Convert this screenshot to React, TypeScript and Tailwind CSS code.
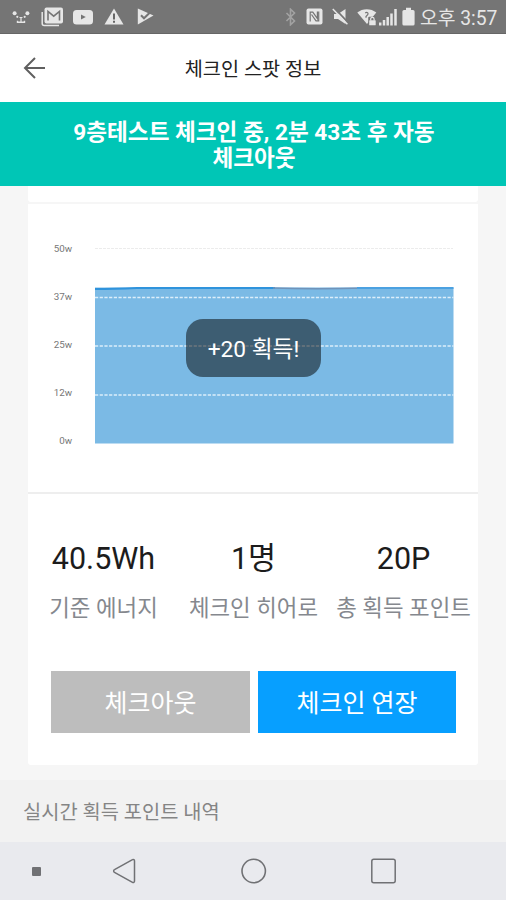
import type { ReactNode } from 'react'

interface Stat {
  value: string
  label: string
}

const STATS: Stat[] = [
  { value: '40.5Wh', label: '기준 에너지' },
  { value: '1명', label: '체크인 히어로' },
  { value: '20P', label: '총 획득 포인트' },
]

const AXIS_LABELS = ['50w', '37w', '25w', '12w', '0w']

function Icon({ w, h, className = '', children }: { w: number; h: number; className?: string; children: ReactNode }) {
  return (
    <svg width={w} height={h} viewBox={`0 0 ${w} ${h}`} fill="none" className={`shrink-0 ${className}`}>
      {children}
    </svg>
  )
}

function StatusBar() {
  return (
    <div className="h-[34px] bg-[#757575] border-b border-[#666666] flex items-center text-[#e6e6e6]">
      <Icon w={18} h={18} className="ml-3">
        <g fill="currentColor">
          <circle cx="2.6" cy="5.3" r="2" />
          <circle cx="15.4" cy="5.3" r="2" />
          <circle cx="5.3" cy="8.8" r="1.1" />
          <circle cx="12.7" cy="8.8" r="1.1" />
        </g>
        <path d="M7.5 9.5h3M9 9.5V14" stroke="currentColor" strokeWidth="1.2" />
        <path d="M5.5 12.8v1.5h7v-1.5" stroke="currentColor" strokeWidth="1.4" />
      </Icon>
      <Icon w={22} h={20} className="ml-[11px]">
        <path d="M1.2 5v11.5a2 2 0 0 0 2 2H18" stroke="currentColor" strokeWidth="1.5" />
        <rect x="3.5" y=".5" width="18.5" height="16" rx="2" fill="currentColor" />
        <path d="M7 13.5v-9l5.700 4.700 5.800-4.700v9" stroke="#757575" strokeWidth="1.6" />
      </Icon>
      <Icon w={20} h={16} className="ml-[10px]">
        <rect y="1" width="20" height="14.5" rx="3.5" fill="currentColor" />
        <path d="M8 5.5v5l4.800-2.500z" fill="#757575" />
      </Icon>
      <Icon w={20} h={17} className="ml-[11px]">
        <path d="M10 .5l9.500 16H.5z" fill="currentColor" />
        <path d="M10 5.5v6M10 12.7v2" stroke="#666666" strokeWidth="2" />
      </Icon>
      <Icon w={17} h={17} className="ml-[13px]">
        <path d="M.8.5 16.5 7.600.8 16.500z" fill="currentColor" />
        <path d="m4 7.300 3 3L14.500 3" stroke="#757575" strokeWidth="2" />
      </Icon>

      <div className="ml-auto mr-[7px] flex items-center">
        <Icon w={12} h={18} className="text-[#a2a2a2]">
          <path d="m1.500 5 8 8-4 3.800V1.200l4 3.800-8 8" stroke="currentColor" strokeWidth="1.6" />
        </Icon>
        <Icon w={17} h={17} className="ml-[9px]">
          <rect x=".5" y=".5" width="16" height="16" rx="2" fill="currentColor" />
          <path d="M4.200 13.500V4.200h2.600l4.600 6.500V3.500M12.700 3.500v9.300H10L5.500 6.500" stroke="#757575" strokeWidth="1.2" />
        </Icon>
        <Icon w={17} h={17} className="ml-[9px]">
          <path d="M2 6h4l7.500-5v15L6 11H2z" fill="currentColor" />
          <path d="m2.500.2 14.300 15.200" stroke="#757575" strokeWidth="1.8" />
          <path d="m.8 1 14.600 15.200" stroke="currentColor" strokeWidth="1.5" />
        </Icon>
        <Icon w={20} h={18} className="ml-[8px]">
          <path d="M.3 4.500C5.500 0 14 0 19.300 4.500L10 16z" fill="currentColor" />
          <path d="M8.200 5c2-1.500 4 .5 2 2.200L9 8.500v1.200" stroke="#757575" strokeWidth="1.2" />
          <rect x="11.2" y="8.8" width="8" height="9" rx="1" fill="#757575" />
          <rect x="12.2" y="12.3" width="6.5" height="5" rx=".5" fill="currentColor" />
          <path d="M13.700 12.500V11a1.700 1.700 0 0 1 3.400 0v1.500" stroke="currentColor" strokeWidth="1.2" />
        </Icon>
        <Icon w={18} h={18} className="ml-[2px]">
          <path d="M1.200 14.500v3M5 12v5.500M8.700 9v8.500M12.500 5.500v12M16.500 1v16.500" stroke="currentColor" strokeWidth="2.5" />
        </Icon>
        <Icon w={13} h={19} className="ml-[5px]">
          <path d="M4 .8h5V3h2a1.600 1.600 0 0 1 1.600 1.600V17a1.600 1.600 0 0 1-1.600 1.600H2A1.600 1.600 0 0 1 .4 17V4.600A1.600 1.600 0 0 1 2 3h2z" fill="currentColor" />
        </Icon>
        <span className="ml-[5px] pt-[3px] w-[79px] whitespace-nowrap text-[19.3px] leading-[31px]">오후 3:57</span>
      </div>
    </div>
  )
}

function EnergyChart() {
  return (
    <div className="relative h-[288px] mt-[2px] bg-white flex items-start pt-[39px]">
      <div className="w-[44px] h-[204px] flex flex-col justify-between text-right text-[9.8px] leading-3 text-[#777777]">
        {AXIS_LABELS.map((label) => (
          <span key={label}>{label}</span>
        ))}
      </div>
      <svg width="359" height="198" viewBox="0 0 359 198" fill="none" className="ml-[23px] mt-[4px]">
        <path d="M0 1.500H358" stroke="#ececec" strokeDasharray="3 1" />
        <rect y="40.5" width="358.5" height="156" fill="#7bbae5" />
        <path d="M0 42Q18 42 42 41H180" stroke="#2f93dc" strokeWidth="2" />
        <path d="M178 41Q220 42.500 270 41" stroke="#6f93ba" strokeWidth="1.5" />
        <path d="M262 41H358.500" stroke="#4ba1e1" strokeWidth="1.8" />
        <path d="M0 50.500H358.500M0 99H358.500M0 148H358.500" stroke="#dceefa" strokeWidth="1.5" strokeDasharray="3.2 1.5" />
      </svg>
      {/* Earned points toast */}
      <div className="absolute left-[158px] top-[115px] w-[135px] h-[58px] rounded-[17px] bg-black/50 text-white text-[22.7px] leading-[61px] text-center">
        +20 획득!
      </div>
    </div>
  )
}

function NavigationBar() {
  return (
    <div className="h-[58px] bg-[#e9eaee] flex items-center text-[#707174]">
      <div className="ml-8 size-[9px] rounded-[1px] bg-[#707174]" />
      <Icon w={24} h={26} className="ml-[71px]">
        <path d="M20.500 1.700 2.500 11.600a1.500 1.500 0 0 0 0 2.700L20.500 24.300a1.300 1.300 0 0 0 2-1.200V2.900a1.300 1.300 0 0 0-2-1.200z" stroke="currentColor" strokeWidth="1.5" />
      </Icon>
      <Icon w={26} h={26} className="ml-[105px]">
        <circle cx="12.7" cy="13" r="11.7" stroke="currentColor" strokeWidth="1.6" />
      </Icon>
      <Icon w={26} h={26} className="ml-[104px]">
        <rect x=".8" y="1.3" width="23.4" height="23.4" rx="2" stroke="currentColor" strokeWidth="1.5" />
      </Icon>
    </div>
  )
}

export default function App() {
  return (
    <div className="w-[506px] h-[900px] overflow-hidden flex flex-col bg-[#f6f6f6] font-['Roboto','Noto_Sans_CJK_KR',sans-serif]">
      <StatusBar />

      <header className="h-[68px] bg-white grid grid-cols-[68px_1fr_68px] items-center">
        <Icon w={22} h={22} className="ml-[23px]">
          <path d="M12 1 2 11l10 10M2 11h20" stroke="#606060" strokeWidth="2" />
        </Icon>
        <h1 className="pt-[3px] text-center text-[19.7px] leading-7 text-[#222222]">체크인 스팟 정보</h1>
      </header>

      <div className="h-[84px] bg-[#00c6b6] pl-[66px] pr-16 pt-[18px] text-center text-white text-[22.6px] leading-[26px] font-bold">
        9층테스트 체크인 중, 2분 43초 후 자동
        <br />
        체크아웃
      </div>

      <main className="w-[450px] ml-[28px] h-[594px]">
        <div className="h-4 bg-white rounded-b-[3px]" />
        <EnergyChart />
        <section className="h-[273px] border-t-2 border-[#eeeeee] bg-white rounded-b-[3px]">
          <div className="grid grid-cols-3 pt-[43px]">
            {STATS.map((stat) => (
              <div key={stat.label} className="pl-px text-center whitespace-nowrap">
                <p className="text-[30.5px] leading-[44px] text-[#1c1c1c]">{stat.value}</p>
                <p className="mt-[11px] text-[22.4px] leading-8 text-[#85888e]">{stat.label}</p>
              </div>
            ))}
          </div>
          <div className="mt-[47px] ml-[23px] flex gap-2 text-white text-[25px]">
            <button className="w-[199px] h-[62px] pt-1 bg-[#bdbdbd]">체크아웃</button>
            <button className="w-[198px] h-[62px] pt-1 bg-[#079fff]">체크인 연장</button>
          </div>
        </section>
      </main>

      <div className="h-[62px] bg-[#f2f2f2] pt-[3px] pl-[23px] flex items-center text-[19.8px] text-[#858585]">
        실시간 획득 포인트 내역
      </div>
      <NavigationBar />
    </div>
  )
}
